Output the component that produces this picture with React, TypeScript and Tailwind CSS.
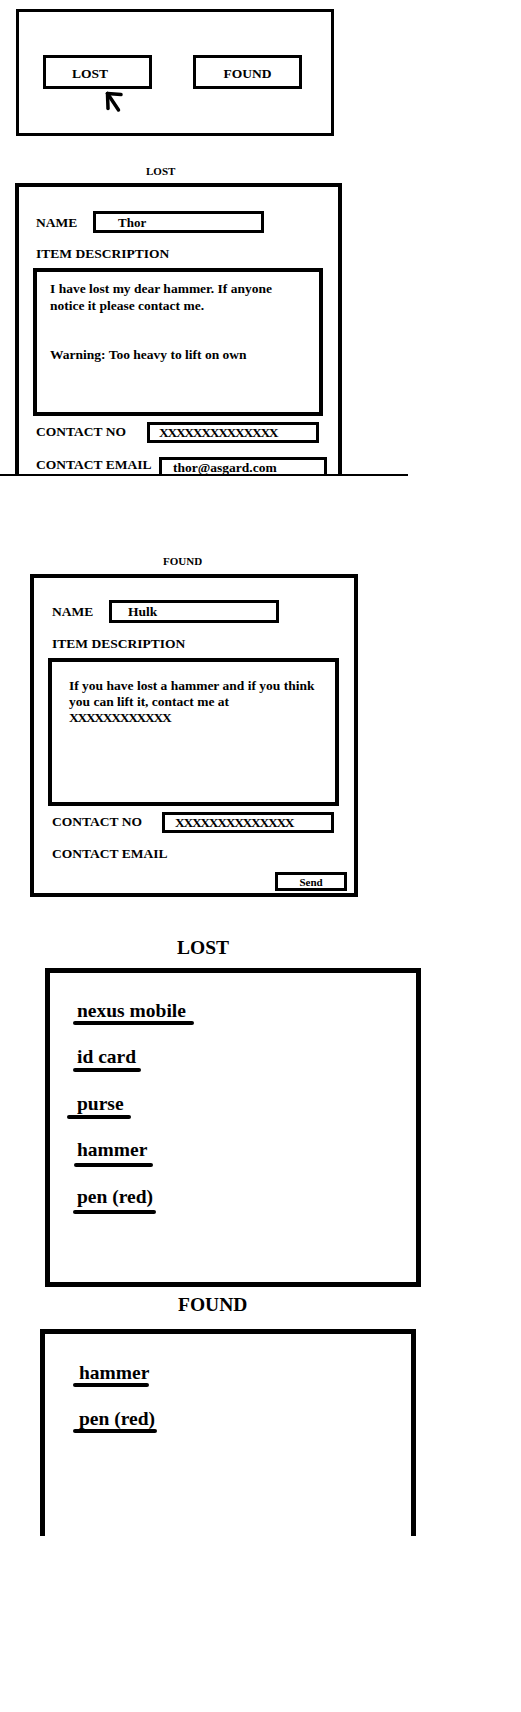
import React from "react";

const Arrow = () => (
  <svg
    className="absolute left-[83px] top-[76px]"
    width="26"
    height="26"
    viewBox="0 0 26 26"
    fill="none"
    stroke="black"
    strokeWidth="3.5"
    strokeLinecap="round"
    strokeLinejoin="round"
  >
    <path d="M5.5 5.5 L16.5 22" />
    <path d="M5.5 5.5 L19 6.5" />
    <path d="M5.5 5.5 L6 20.5" />
  </svg>
);

type Item = { text: string; ml: number; w: number; mt: number };

const lostItems: Item[] = [
  { text: "nexus mobile", ml: -4, w: 121, mt: -1 },
  { text: "id card", ml: -4, w: 68, mt: -0.5 },
  { text: "purse", ml: -10, w: 64, mt: 0 },
  { text: "hammer", ml: -3, w: 79, mt: 2 },
  { text: "pen (red)", ml: -4, w: 83, mt: 2.5 },
];

const foundItems: Item[] = [
  { text: "hammer", ml: -6, w: 76, mt: -0.5 },
  { text: "pen (red)", ml: -6, w: 84, mt: -0.5 },
];

const ListItem = ({ item }: { item: Item }) => (
  <div className="h-[46.4px]">
    <div className="pt-[1px] text-[19.5px] leading-[22px] whitespace-nowrap">{item.text}</div>
    <div
      className="h-[4px] rounded-full bg-black"
      style={{ marginLeft: item.ml, width: item.w, marginTop: item.mt }}
    />
  </div>
);

export default function App() {
  return (
    <div className="w-[521px] h-[1712px] bg-white text-black font-bold [font-family:'Liberation_Serif',serif] overflow-hidden">
      {/* Section 1: chooser */}
      <div className="relative ml-[16px] mt-[9px] w-[318px] h-[127px] border-[3px] border-black">
        <div className="flex pt-[43px] pl-[24px] gap-[41px]">
          <div className="w-[109px] h-[34px] border-[3px] border-black flex items-center pl-[26px] pt-[4px] text-[13.5px] leading-[16px]">
            LOST
          </div>
          <div className="w-[109px] h-[34px] border-[3px] border-black flex items-center justify-center pt-[4px] text-[13.5px] leading-[16px]">
            FOUND
          </div>
        </div>
        <Arrow />
      </div>

      {/* Section 2: LOST form */}
      <div className="ml-[146px] mt-[29px] text-[11px] leading-[13px]">LOST</div>
      <div className="ml-[15px] mt-[5px] w-[327px] h-[291px] border-x-4 border-t-4 border-black overflow-hidden pl-[17px] pt-[24px] text-[13.5px] leading-[16px]">
        <div className="flex items-center h-[22px]">
          <div className="w-[57px] shrink-0 pt-[1px]">NAME</div>
          <div className="w-[171px] h-[22px] border-[3px] border-black flex items-center pl-[22px] pt-[1px] text-[13px]">
            Thor
          </div>
        </div>
        <div className="mt-[13px] whitespace-nowrap">ITEM DESCRIPTION</div>
        <div className="mt-[6px] -ml-[3px] w-[290px] h-[148px] border-4 border-black pt-[9px] pl-[13px] leading-[16.5px] whitespace-nowrap">
          <div>I have lost my dear hammer. If anyone</div>
          <div>notice it please contact me.</div>
          <div className="mt-[33px]">Warning: Too heavy to lift on own</div>
        </div>
        <div className="mt-[6px] flex items-start">
          <div className="w-[111px] shrink-0 pt-[2px] whitespace-nowrap">CONTACT NO</div>
          <div className="w-[172px] h-[21px] border-[3px] border-black flex items-center pl-[9px] pt-[1px] tracking-[-1.3px] text-[13.5px]">
            XXXXXXXXXXXXXX
          </div>
        </div>
        <div className="mt-[14px] flex items-start">
          <div className="w-[123px] shrink-0 whitespace-nowrap">CONTACT EMAIL</div>
          <div className="w-[168px] h-[21px] border-[3px] border-black flex items-center pl-[11px] shrink-0">
            thor@asgard.com
          </div>
        </div>
      </div>
      <div className="h-[2px] w-[408px] bg-black" />

      {/* Section 3: FOUND form */}
      <div className="ml-[163px] mt-[79px] text-[11px] leading-[13px]">FOUND</div>
      <div className="ml-[30px] mt-[6px] w-[328px] h-[323px] border-4 border-black pl-[18px] pt-[22px] text-[13.5px] leading-[16px]">
        <div className="flex items-center h-[23px]">
          <div className="w-[57px] shrink-0">NAME</div>
          <div className="w-[170px] h-[23px] border-[3px] border-black flex items-center pl-[16px]">
            Hulk
          </div>
        </div>
        <div className="mt-[13px] whitespace-nowrap">ITEM DESCRIPTION</div>
        <div className="mt-[5.5px] -ml-[4px] w-[291px] h-[148px] border-4 border-black pt-[16px] pl-[17px] whitespace-nowrap">
          <div>If you have lost a hammer and if you think</div>
          <div>you can lift it, contact me at</div>
          <div className="tracking-[-1.3px]">XXXXXXXXXXXX</div>
        </div>
        <div className="mt-[6px] flex items-start">
          <div className="w-[110px] shrink-0 pt-[2px] whitespace-nowrap">CONTACT NO</div>
          <div className="w-[172px] h-[21px] border-[3px] border-black flex items-center pl-[10px] pt-[1px] tracking-[-1.3px]">
            XXXXXXXXXXXXXX
          </div>
        </div>
        <div className="mt-[13.5px] whitespace-nowrap">CONTACT EMAIL</div>
        <div className="mt-[10px] ml-[223px] w-[72px] h-[19px] border-[3px] border-black flex items-center justify-center text-[11px] leading-[12px]">
          Send
        </div>
      </div>

      {/* Section 4: LOST list */}
      <div className="ml-[177px] mt-[40px] text-[19.5px] leading-[22px]">LOST</div>
      <div className="ml-[45px] mt-[9px] w-[376px] h-[319px] border-[5px] border-black pl-[27px] pt-[26px]">
        {lostItems.map((it) => (
          <ListItem key={it.text} item={it} />
        ))}
      </div>

      {/* Section 5: FOUND list */}
      <div className="ml-[178px] mt-[6.5px] text-[19.5px] leading-[22px]">FOUND</div>
      <div className="ml-[40px] mt-[13.5px] w-[376px] h-[207px] border-x-[5px] border-t-[5px] border-black pl-[34px] pt-[26.5px]">
        {foundItems.map((it) => (
          <ListItem key={it.text} item={it} />
        ))}
      </div>
    </div>
  );
}
